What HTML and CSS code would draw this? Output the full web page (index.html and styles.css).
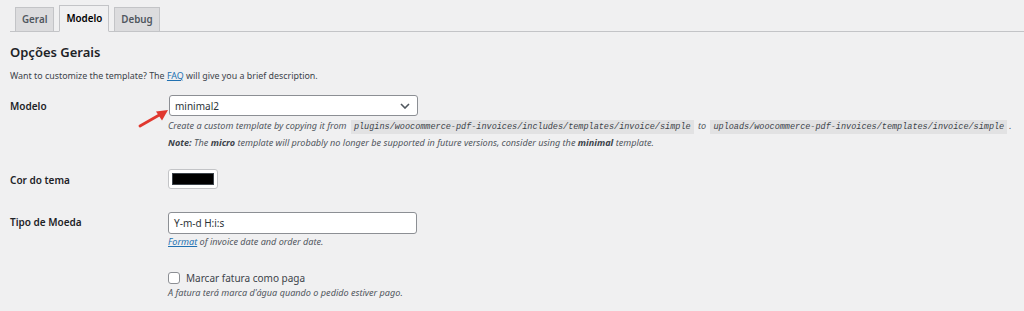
FILE: index.html
```html
<!DOCTYPE html>
<html lang="pt">
<head>
  <meta charset="UTF-8">
  <title>Configurações – Modelo</title>
  <link rel="stylesheet" href="styles.css">
</head>
<body>
  <div class="wrap">
    <nav class="tabs">
      <a href="#" class="tab">Geral</a>
      <a href="#" class="tab active">Modelo</a>
      <a href="#" class="tab">Debug</a>
    </nav>

    <h2 class="section-title">Opções Gerais</h2>
    <p class="intro">Want to customize the template? The <a href="#">FAQ</a> will give you a brief description.</p>

    <div class="form">
      <div class="row row-template">
        <div class="label">Modelo</div>
        <div class="field">
          <div class="select">
            <span>minimal2</span>
            <svg class="chev" width="10" height="6" viewBox="0 0 10 6"><path d="M1 1l4 4 4-4" fill="none" stroke="#50575e" stroke-width="1.6"/></svg>
          </div>
          <p class="desc">Create a custom template by copying it from <code>plugins/woocommerce-pdf-invoices/includes/templates/invoice/simple</code> to <code>uploads/woocommerce-pdf-invoices/templates/invoice/simple</code>.</p>
          <p class="desc"><b>Note:</b> The <b>micro</b> template will probably no longer be supported in future versions, consider using the <b>minimal</b> template.</p>
          <svg class="arrow" width="34" height="24" viewBox="0 0 34 24">
            <path d="M3 21L24 9" stroke="#e0382f" stroke-width="2.8" stroke-linecap="round"/>
            <path d="M31 5L19 6.5 25 15.5z" fill="#e0382f"/>
          </svg>
        </div>
      </div>

      <div class="row row-color">
        <div class="label">Cor do tema</div>
        <div class="field">
          <div class="swatch"><span></span></div>
        </div>
      </div>

      <div class="row row-date">
        <div class="label">Tipo de Moeda</div>
        <div class="field">
          <div class="text-input">Y-m-d H:i:s</div>
          <p class="desc"><a href="#">Format</a> of invoice date and order date.</p>
        </div>
      </div>

      <div class="row row-check">
        <div class="label"></div>
        <div class="field">
          <label class="check"><span class="box"></span>Marcar fatura como paga</label>
          <p class="desc">A fatura terá marca d'água quando o pedido estiver pago.</p>
        </div>
      </div>
    </div>
  </div>
</body>
</html>
```

FILE: styles.css
```css
* { margin: 0; padding: 0; box-sizing: border-box; }
body {
  background: #f0f0f1;
  color: #3c434a;
  font-family: "Noto Sans", "Open Sans", sans-serif;
  font-size: 10px;
  overflow: hidden;
}
a { color: #2271b1; }

.wrap {
  padding: 5px 0 0 10px;
}

.tabs {
  display: flex;
  align-items: flex-end;
  gap: 5px;
  border-bottom: 1px solid #c3c4c7;
  padding-left: 5px;
  height: 27px;
}
.tab {
  display: block;
  height: 25px;
  line-height: 23px;
  padding: 0 6px;
  margin-bottom: -1px;
  background: #dcdcde;
  border: 1px solid #c3c4c7;
  color: #50575e;
  font-size: 9.8px;
  font-weight: 600;
  text-decoration: none;
}
.tab.active {
  height: 27px;
  line-height: 25px;
  background: #f0f0f1;
  border-bottom-color: #f0f0f1;
  color: #000;
}

.section-title {
  margin-top: 11px;
  font-size: 13px;
  font-weight: 600;
  color: #1d2327;
  line-height: 18px;
}
.intro {
  margin-top: 8px;
  font-size: 8.9px;
  line-height: 14px;
  color: #3c434a;
}

.form {
  margin-top: 5px;
}
.row {
  display: flex;
}
.label {
  width: 158px;
  flex-shrink: 0;
  font-weight: 600;
  font-size: 10px;
  color: #1d2327;
}
.field {
  position: relative;
}

.row-template { padding-top: 7px; }
.row-template .label { padding-top: 4px; }
.row-color { padding-top: 19px; }
.row-color .label { padding-top: 4px; }
.row-date { padding-top: 23px; }
.row-date .label { padding-top: 3px; }
.row-check { padding-top: 22px; }

.select, .text-input {
  width: 249px;
  height: 21px;
  background: #fff;
  border: 1px solid #8c8f94;
  border-radius: 3px;
  display: flex;
  align-items: center;
  padding: 0 5px;
  font-size: 10px;
  color: #2c3338;
}
.select { justify-content: space-between; margin-left: 1px; }
.text-input { height: 22px; }
.chev { margin-right: 2px; }

.desc {
  font-style: italic;
  font-size: 9.1px;
  line-height: 15px;
  color: #50575e;
  white-space: nowrap;
}
.desc b { font-weight: 700; color: #3c434a; }
.row-template .desc:first-of-type { margin-top: 2px; }
.row-date .desc { margin-top: 0; }

code {
  font-family: "Liberation Mono", monospace;
  font-style: italic;
  font-size: 8.5px;
  background: #e2e2e3;
  padding: 2px 3px;
  margin: 0 2px;
  color: #3c434a;
}

.arrow {
  position: absolute;
  left: -31px;
  top: 10px;
}

.swatch {
  width: 50px;
  height: 20px;
  border: 1px solid #c3c4c7;
  border-radius: 3px;
  background: #fff;
  padding: 3px;
}
.swatch span {
  display: block;
  height: 12px;
  background: #000;
  border: 1px solid #3c434a;
}

.check {
  display: flex;
  align-items: center;
  gap: 6px;
  font-size: 10px;
  color: #3c434a;
  height: 14px;
}
.box {
  width: 12px;
  height: 12px;
  background: #fff;
  border: 1px solid #8c8f94;
  border-radius: 3px;
}
.row-check .desc { margin-top: 0; }
```
